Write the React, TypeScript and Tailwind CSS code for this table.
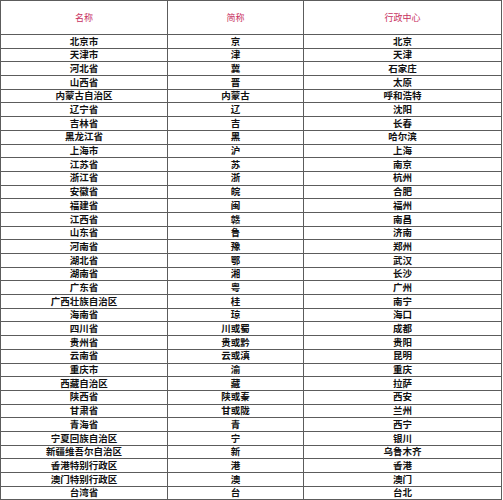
import React from 'react';

const rows: [string, string, string][] = [
  ['北京市', '京', '北京'],
  ['天津市', '津', '天津'],
  ['河北省', '冀', '石家庄'],
  ['山西省', '晋', '太原'],
  ['内蒙古自治区', '内蒙古', '呼和浩特'],
  ['辽宁省', '辽', '沈阳'],
  ['吉林省', '吉', '长春'],
  ['黑龙江省', '黑', '哈尔滨'],
  ['上海市', '沪', '上海'],
  ['江苏省', '苏', '南京'],
  ['浙江省', '浙', '杭州'],
  ['安徽省', '皖', '合肥'],
  ['福建省', '闽', '福州'],
  ['江西省', '赣', '南昌'],
  ['山东省', '鲁', '济南'],
  ['河南省', '豫', '郑州'],
  ['湖北省', '鄂', '武汉'],
  ['湖南省', '湘', '长沙'],
  ['广东省', '粤', '广州'],
  ['广西壮族自治区', '桂', '南宁'],
  ['海南省', '琼', '海口'],
  ['四川省', '川或蜀', '成都'],
  ['贵州省', '贵或黔', '贵阳'],
  ['云南省', '云或滇', '昆明'],
  ['重庆市', '渝', '重庆'],
  ['西藏自治区', '藏', '拉萨'],
  ['陕西省', '陕或秦', '西安'],
  ['甘肃省', '甘或陇', '兰州'],
  ['青海省', '青', '西宁'],
  ['宁夏回族自治区', '宁', '银川'],
  ['新疆维吾尔自治区', '新', '乌鲁木齐'],
  ['香港特别行政区', '港', '香港'],
  ['澳门特别行政区', '澳', '澳门'],
  ['台湾省', '台', '台北'],
];

const cell = 'flex items-center justify-center border-r border-b border-[#5c5c5c]';

export default function App() {
  return (
    <div className="w-[503px] h-[500px] overflow-hidden bg-white font-['Noto_Sans_CJK_SC',sans-serif]">
      <div className="grid grid-cols-[167px_136px_198px] w-[502px] border-l border-t border-[#5c5c5c]">
        {/* Header */}
        {['名称', '简称', '行政中心'].map((h) => (
          <div key={h} className={`${cell} h-[34px] text-[9px] text-[#c8325f] leading-none`}>
            {h}
          </div>
        ))}

        {/* Rows */}
        {rows.map(([name, abbr, capital]) => (
          <React.Fragment key={name}>
            <div className={`${cell} h-[13.7px] text-[9.5px] font-bold text-[#111] leading-none`}>{name}</div>
            <div className={`${cell} h-[13.7px] text-[9.5px] font-bold text-[#111] leading-none`}>{abbr}</div>
            <div className={`${cell} h-[13.7px] text-[9.5px] font-bold text-[#111] leading-none`}>{capital}</div>
          </React.Fragment>
        ))}
      </div>
    </div>
  );
}
